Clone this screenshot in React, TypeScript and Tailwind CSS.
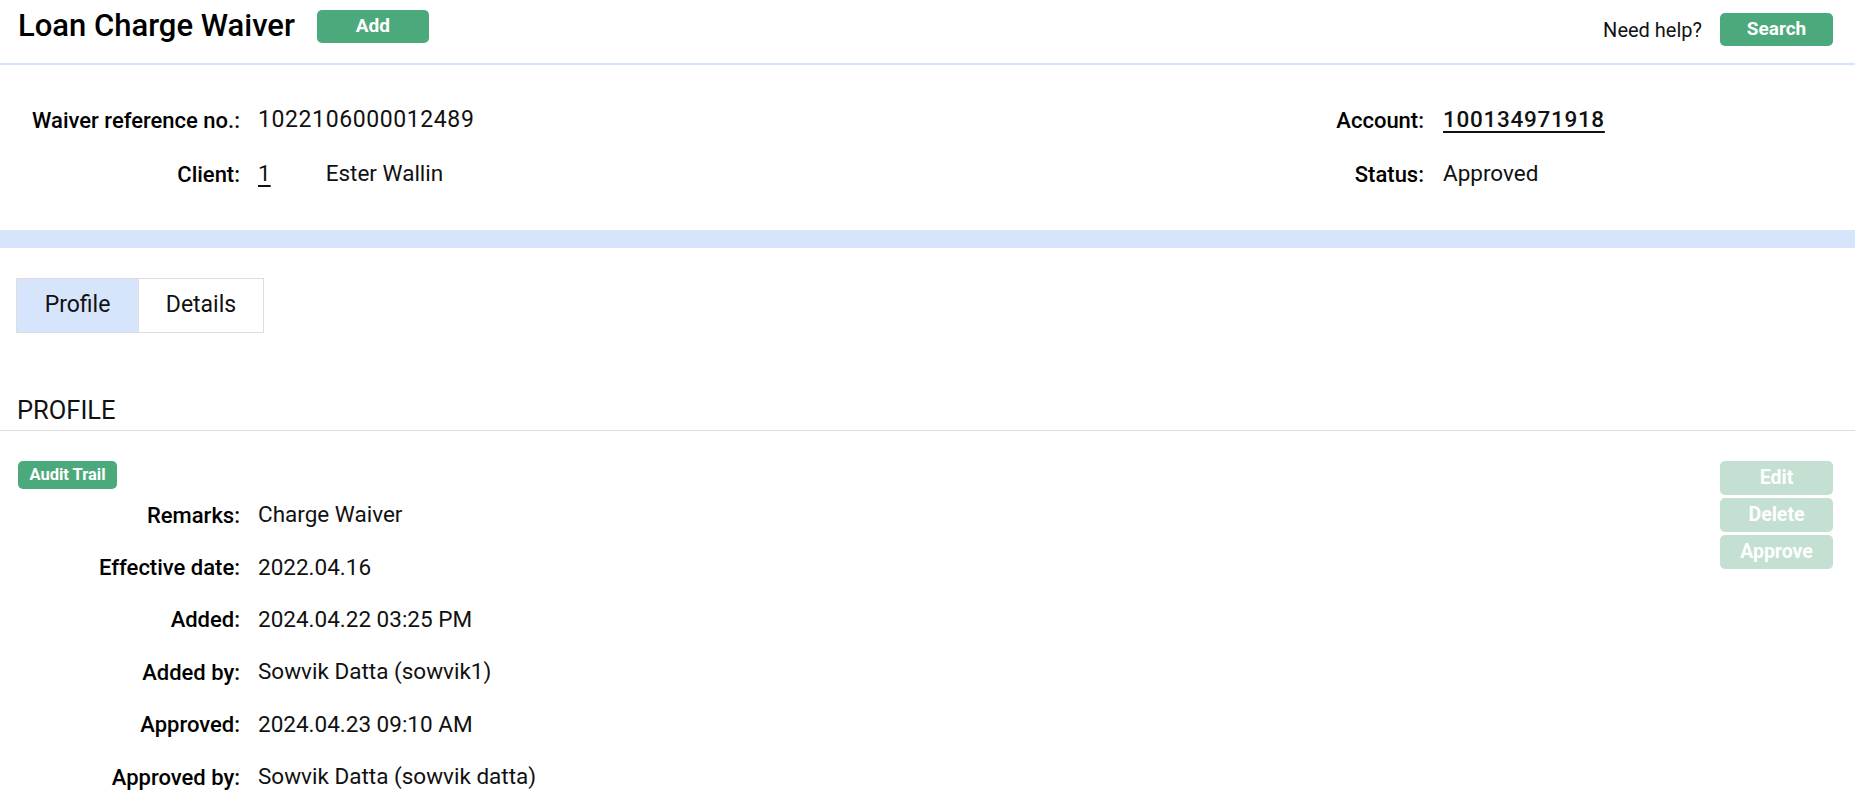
import React from "react";

const font = { fontFamily: "Roboto, 'Noto Sans', sans-serif" };

function InfoRow({ label, children, labelWidth }: { label: string; children: React.ReactNode; labelWidth: string }) {
  return (
    <div className="flex h-[54px] items-center">
      <div className={`${labelWidth} shrink-0 text-right text-[22px] font-medium text-black`}>{label}</div>
      <div className="text-[22.5px] text-[#111]">{children}</div>
    </div>
  );
}

function DetailRow({ label, value }: { label: string; value: string }) {
  return (
    <div className="flex h-[52.4px] items-center">
      <div className="w-[240px] shrink-0 text-right text-[22px] font-medium text-black">{label}</div>
      <div className="pl-[18px] text-[22.5px] text-[#111]">{value}</div>
    </div>
  );
}

export default function App() {
  const rows = [
    { label: "Remarks:", value: "Charge Waiver" },
    { label: "Effective date:", value: "2022.04.16" },
    { label: "Added:", value: "2024.04.22 03:25 PM" },
    { label: "Added by:", value: "Sowvik Datta (sowvik1)" },
    { label: "Approved:", value: "2024.04.23 09:10 AM" },
    { label: "Approved by:", value: "Sowvik Datta (sowvik datta)" },
  ];

  return (
    <div className="min-h-screen w-full bg-white text-black" style={font}>
      {/* Header */}
      <div className="flex h-[65px] items-start justify-between border-b-2 border-[#d6e4fc] pl-[18px] pr-[22px]">
        <div className="flex items-center gap-[22px] pt-[9px]">
          <h1 className="text-[31px] font-medium leading-[34px] text-black">Loan Charge Waiver</h1>
          <button
            type="button"
            className="h-[33px] w-[112px] rounded-[5px] bg-[#4ca97c] text-[19px] font-bold text-white"
          >
            Add
          </button>
        </div>
        <div className="flex items-center gap-[18px] pt-[13px]">
          <span className="text-[20px] text-[#111]">Need help?</span>
          <button
            type="button"
            className="h-[33px] w-[113px] rounded-[5px] bg-[#4ca97c] text-[19px] font-bold text-white"
          >
            Search
          </button>
        </div>
      </div>

      {/* Summary */}
      <div className="flex pt-[28px] pb-[29px]">
        <div className="flex-1">
          <InfoRow label="Waiver reference no.:" labelWidth="w-[258px] pr-[18px]">
            <span className="text-[23px] tracking-[0.6px]">1022106000012489</span>
          </InfoRow>
          <InfoRow label="Client:" labelWidth="w-[258px] pr-[18px]">
            <span className="flex items-center">
              <a href="#" className="underline underline-offset-4">1</a>
              <span className="ml-[55px]">Ester Wallin</span>
            </span>
          </InfoRow>
        </div>
        <div className="w-[617px]">
          <InfoRow label="Account:" labelWidth="w-[205px] pr-[19px]">
            <a href="#" className="font-medium tracking-[0.7px] underline underline-offset-4">100134971918</a>
          </InfoRow>
          <InfoRow label="Status:" labelWidth="w-[205px] pr-[19px]">
            Approved
          </InfoRow>
        </div>
      </div>

      <div className="h-[18px] w-full bg-[#d6e4fc]" />

      {/* Tabs */}
      <div className="mt-[30px] ml-[16px] flex h-[55px] w-fit border border-[#dddddd]">
        <button type="button" className="h-full w-[121px] bg-[#d6e4fc] text-[23px] text-[#111]">
          Profile
        </button>
        <button type="button" className="h-full w-[125px] border-l border-[#dddddd] bg-white text-[23px] text-[#111]">
          Details
        </button>
      </div>

      {/* Section heading */}
      <div className="mt-[62px] border-b border-[#dddddd] pb-[5px] pl-[17px]">
        <h2 className="text-[25.5px] leading-[30px] text-[#111]">PROFILE</h2>
      </div>

      {/* Profile content */}
      <div className="flex items-start justify-between pt-[30px] pl-[18px] pr-[22px]">
        <div>
          <button
            type="button"
            className="h-[28px] w-[99px] rounded-[5px] bg-[#4ca97c] text-[16.5px] font-bold text-white"
          >
            Audit Trail
          </button>
          <div className="-ml-[18px]">
            {rows.map((r) => (
              <DetailRow key={r.label} label={r.label} value={r.value} />
            ))}
          </div>
        </div>
        <div className="flex w-[113px] flex-col gap-[3px]">
          {["Edit", "Delete", "Approve"].map((b) => (
            <button
              key={b}
              type="button"
              disabled
              className="h-[34px] w-full rounded-[5px] bg-[#c3e0d2] text-[19.5px] font-bold text-white"
            >
              {b}
            </button>
          ))}
        </div>
      </div>
    </div>
  );
}
